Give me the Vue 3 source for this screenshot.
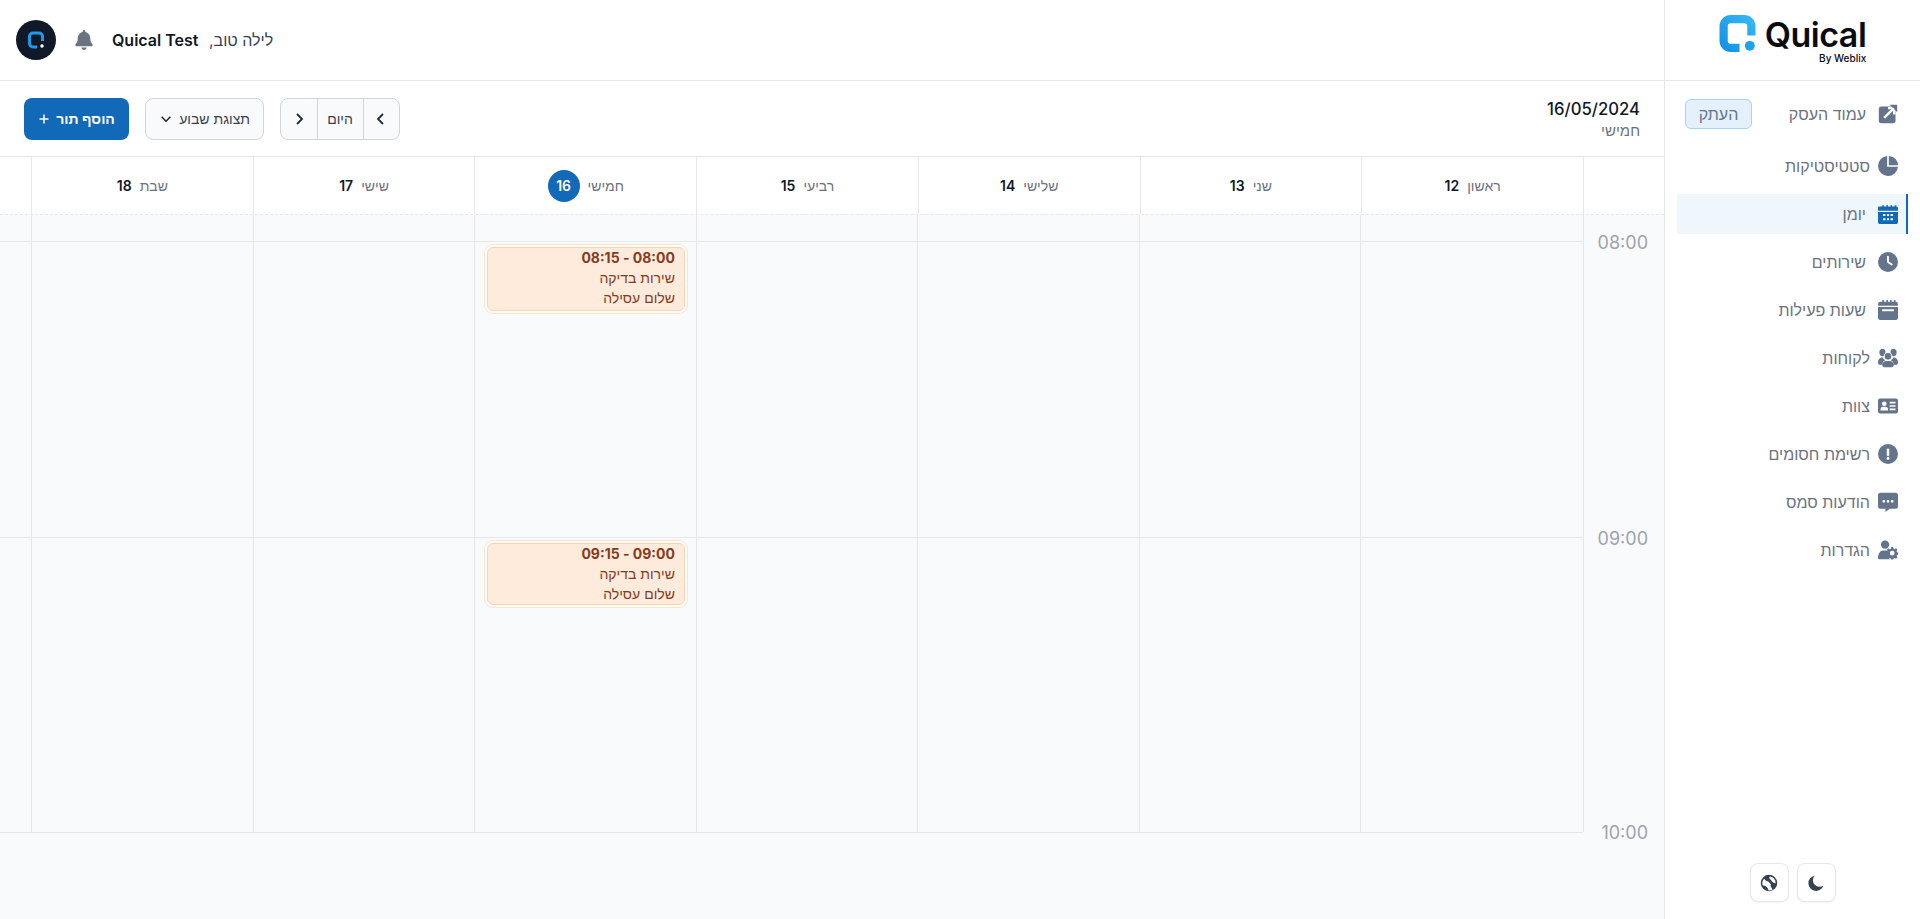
<script setup>
const navItems = [
  { label: 'סטטיסטיקות', icon: 'pie', tight: true },
  { label: 'יומן', icon: 'calendar', active: true },
  { label: 'שירותים', icon: 'clock' },
  { label: 'שעות פעילות', icon: 'hours' },
  { label: 'לקוחות', icon: 'users', tight: true },
  { label: 'צוות', icon: 'card', tight: true },
  { label: 'רשימת חסומים', icon: 'alert', tight: true },
  { label: 'הודעות סמס', icon: 'message', tight: true },
  { label: 'הגדרות', icon: 'gear', tight: true }
];

const days = [
  { name: 'ראשון', num: 12 },
  { name: 'שני', num: 13 },
  { name: 'שלישי', num: 14 },
  { name: 'רביעי', num: 15 },
  { name: 'חמישי', num: 16, today: true },
  { name: 'שישי', num: 17 },
  { name: 'שבת', num: 18 }
];

const hours = [
  { time: '08:00', event: '08:00 - 08:15', height: 64 },
  { time: '09:00', event: '09:00 - 09:15', height: 62 }
];
</script>

<template>
  <div class="app" dir="rtl">
    <aside class="sidebar">
      <div class="logo">
        <div class="logo-text" dir="ltr">
          <span class="logo-name">Quical</span>
          <span class="logo-by">By Weblix</span>
        </div>
        <svg class="logo-mark" viewBox="0 0 36 36">
          <defs>
            <linearGradient id="lg" x1="0" y1="1" x2="1" y2="0">
              <stop offset="0" stop-color="#1593e4" />
              <stop offset="1" stop-color="#35b6f4" />
            </linearGradient>
          </defs>
          <path d="M31.500 20V11a7 7 0 0 0-7-7H11.500a7 7 0 0 0-7 7v14a7 7 0 0 0 7 7H20" fill="none" stroke="url(#lg)" stroke-width="8" stroke-linecap="butt" />
          <circle cx="30" cy="30" r="4.800" fill="#1ba4ea" />
        </svg>
      </div>

      <nav class="nav">
        <a class="nav-item first">
          <svg class="nav-icon" viewBox="0 0 24 24">
            <rect x="1" y="3" width="20" height="20" rx="3" />
            <path d="M7.500 16.500 18 6M12 5h7.500v7.500" fill="none" stroke="#fff" stroke-width="2.800" />
            <path d="M14 1h9v9l-3-3-3-3z" />
            <path d="M7.500 16.500 19 5" fill="none" stroke="#fff" stroke-width="2.600" />
          </svg>
          <span>עמוד העסק</span>
          <button class="copy">העתק</button>
        </a>
        <a v-for="item in navItems" :key="item.label" class="nav-item" :class="{ active: item.active, tight: item.tight }">
          <svg class="nav-icon" viewBox="0 0 24 24">
            <template v-if="item.icon === 'pie'">
              <path d="M11 0v13h13A12 12 0 1 1 11 0z" />
              <path d="M13 0A11 11 0 0 1 24 11H13z" />
            </template>
            <template v-else-if="item.icon === 'calendar'">
              <path d="M3 3h2V1.500h2V3h3V1.500h2V3h3V1.500h2V3h3V1.500h2V3a2 2 0 0 1 2 2v3H0V5a2 2 0 0 1 1-2z" />
              <path fill-rule="evenodd" d="M0 9.500h24V22a2 2 0 0 1-2 2H2a2 2 0 0 1-2-2zM6 12v2.500h3V12zm4.800 0v2.500h2.400V12zM15 12v2.500h3V12zM6 17v2.500h3V17zm4.800 0v2.500h2.400V17zM15 17v2.500h3V17z" />
            </template>
            <path v-else-if="item.icon === 'clock'" d="M12 0a12 12 0 1 1 0 24A12 12 0 0 1 12 0zm-1.200 5.500V12c0 .4.200.8.500 1l4.500 3c.5.400 1.200.200 1.600-.300s.200-1.200-.300-1.600l-4-2.700V5.500a1.200 1.200 0 0 0-2.300 0z" />
            <path v-else-if="item.icon === 'hours'" fill-rule="evenodd" d="M5 0h2v2h3V0h2v2h2.500V0h2v2H19V0h2v2.100A3 3 0 0 1 24 5v16a3 3 0 0 1-3 3H3a3 3 0 0 1-3-3V5a3 3 0 0 1 3-3h2zM0 7v1.500h24V7zm5 4v2.500h14V11z" />
            <path v-else-if="item.icon === 'users'" fill-rule="evenodd" d="M5.500 1a3.500 3.500 0 0 1 3 5.300A5.500 5.500 0 0 0 6.700 9.800 3.500 3.500 0 1 1 5.500 1zm13 0a3.500 3.500 0 1 1-1.200 8.800 5.500 5.500 0 0 0-1.800-3.500A3.500 3.500 0 0 1 18.500 1zM12 6a4 4 0 1 1 0 8 4 4 0 0 1 0-8zM5.600 11.500c.600 1.400 1.700 2.500 3.100 3.100-2.200 1-3.700 3-3.700 5.400H2a2 2 0 0 1-2-2v-1c0-3 2.500-5.500 5.600-5.500zm12.800 0c3.100 0 5.600 2.500 5.600 5.500v1a2 2 0 0 1-2 2h-3c0-2.400-1.500-4.400-3.700-5.400 1.400-.6 2.500-1.700 3.100-3.100zM10 15.500h4c2.800 0 5 2.200 5 5a2.500 2.500 0 0 1-2.500 2.500h-9A2.500 2.500 0 0 1 5 20.500c0-2.800 2.200-5 5-5z" />
            <path v-else-if="item.icon === 'card'" fill-rule="evenodd" d="M2.500 3h19A2.500 2.500 0 0 1 24 5.500v13a2.500 2.500 0 0 1-2.500 2.500h-19A2.500 2.500 0 0 1 0 18.500v-13A2.500 2.500 0 0 1 2.500 3zm5 3.500a2.800 2.800 0 1 0 0 5.600 2.800 2.800 0 0 0 0-5.600zM6 13a3 3 0 0 0-3 3v1.500h9V16a3 3 0 0 0-3-3zm8-6v2h7V7zm0 4v2h7v-2zm0 4v2h7v-2z" />
            <path v-else-if="item.icon === 'alert'" d="M12 0a12 12 0 1 1 0 24A12 12 0 0 1 12 0zm0 5.500c-.8 0-1.500.7-1.500 1.500v5.800a1.500 1.500 0 0 0 3 0V7c0-.8-.7-1.500-1.500-1.500zM10.200 17a1.800 1.800 0 1 0 3.600 0 1.800 1.800 0 0 0-3.600 0z" />
            <path v-else-if="item.icon === 'message'" fill-rule="evenodd" d="M3 1h18a3 3 0 0 1 3 3v13a3 3 0 0 1-3 3h-7l-5 4v-4H3a3 3 0 0 1-3-3V4a3 3 0 0 1 3-3zm4 8.500a1.700 1.700 0 1 0 0 3.400 1.700 1.700 0 0 0 0-3.400zm5 0a1.700 1.700 0 1 0 0 3.400 1.700 1.700 0 0 0 0-3.400zm5 0a1.700 1.700 0 1 0 0 3.400 1.700 1.700 0 0 0 0-3.400z" />
            <template v-else-if="item.icon === 'gear'">
              <circle cx="8.500" cy="5.500" r="5" />
              <path d="M6.500 12.500h4c.6 0 1.200.1 1.700.3-.5 2.600-.3 6.700 1.800 10.200H1.500A1.500 1.500 0 0 1 0 21.500C0 16.500 2.500 12.500 6.500 12.500z" />
              <path fill-rule="evenodd" d="M17.300 10h2.400l.4 1.900 1.400.6 1.700-1 1.600 1.600-1 1.700.6 1.400 1.600.4v2.400l-1.600.4-.6 1.400 1 1.700-1.600 1.600-1.700-1-1.400.6-.4 1.300h-2.400l-.4-1.300-1.400-.6-1.700 1-1.600-1.600 1-1.700-.6-1.400-1.600-.4v-2.400l1.600-.4.6-1.400-1-1.700 1.600-1.600 1.700 1 1.400-.6zm1.200 4.500a2.800 2.800 0 1 0 0 5.600 2.800 2.800 0 0 0 0-5.600z" transform="translate(-1.500 -1.500)" />
            </template>
          </svg>
          <span>{{ item.label }}</span>
        </a>
      </nav>

      <div class="side-tools">
        <button class="tool">
          <svg viewBox="0 0 24 24" width="16" height="16">
            <path d="M10 1A11.500 11.500 0 1 0 23 16 10 10 0 0 1 10 1z" />
          </svg>
        </button>
        <button class="tool">
          <svg viewBox="0 0 24 24" width="18" height="18">
            <path fill-rule="evenodd" d="M12 1a11 11 0 1 1 0 22 11 11 0 0 1 0-22zm-6.500 5.300A8.900 8.900 0 0 0 3.500 15l4.500 1.200 3 3.800v1.800c.4.100.7.100 1 .1 1.800 0 3.400-.500 4.800-1.400l-2.300-3.500c-.4-.7-.5-1-.3-1.800l.3-1.700-3.500-3.500-3-1zm8-3.100L12 5l3 3.500 2 2.500 3.800 1.500A8.900 8.900 0 0 0 13.500 3.200z" />
          </svg>
        </button>
      </div>
    </aside>

    <main class="main">
      <header class="topbar">
        <div class="greeting">לילה טוב, <b>Quical Test</b></div>
        <svg class="bell" viewBox="0 0 448 512">
          <path d="M224 0c-17.700 0-32 14.300-32 32V51.200C119 66 64 130.600 64 208v18.800c0 47-17.300 92.400-48.500 127.600l-7.400 8.300c-8.400 9.400-10.400 22.900-5.300 34.400S19.400 416 32 416H416c12.600 0 24-7.400 29.200-18.900s3.100-25-5.300-34.400l-7.400-8.300C401.300 319.200 384 273.900 384 226.800V208c0-77.400-55-142-128-156.800V32c0-17.700-14.300-32-32-32zm45.300 493.300c12-12 18.700-28.300 18.700-45.300H224 160c0 17 6.700 33.300 18.700 45.300s28.300 18.700 45.300 18.700s33.300-6.700 45.300-18.700z" />
        </svg>
        <div class="avatar">
          <svg viewBox="0 0 36 36" width="18" height="18">
            <path d="M31 20V11a7 7 0 0 0-7-7H12a7 7 0 0 0-7 7v14a7 7 0 0 0 7 7h8" fill="none" stroke="#1d9be8" stroke-width="6" />
            <circle cx="30" cy="30" r="3.500" fill="#fff" />
          </svg>
        </div>
      </header>

      <section class="toolbar">
        <div class="date">
          <div class="date-main">16/05/2024</div>
          <div class="date-sub">חמישי</div>
        </div>
        <div class="nav-group">
          <button class="seg seg-arrow">
            <svg viewBox="0 0 16 16" width="16" height="16"><path d="M10 3 5 8l5 5" /></svg>
          </button>
          <button class="seg seg-today">היום</button>
          <button class="seg seg-arrow">
            <svg viewBox="0 0 16 16" width="16" height="16"><path d="m6 3 5 5-5 5" /></svg>
          </button>
        </div>
        <button class="view-btn">
          <span>תצוגת שבוע</span>
          <svg viewBox="0 0 16 16" width="14" height="14"><path d="m3 5.500 5 5 5-5" /></svg>
        </button>
        <button class="add-btn">
          <span>הוסף תור</span>
          <svg viewBox="0 0 16 16" width="12" height="12"><path d="M8 2v12M2 8h12" /></svg>
        </button>
      </section>

      <div class="day-head">
        <div class="head-cell"></div>
        <div v-for="d in days" :key="d.num" class="head-cell">
          <span class="day-name">{{ d.name }}</span>
          <span class="day-num" :class="{ today: d.today }">{{ d.num }}</span>
        </div>
        <div class="head-rest"></div>
      </div>

      <div class="grid">
        <div class="cell allday time-cell"></div>
        <div v-for="d in days" :key="d.num" class="cell allday"></div>
        <div class="cell allday rest"></div>

        <template v-for="h in hours" :key="h.time">
          <div class="cell hour time-cell"><span class="time">{{ h.time }}</span></div>
          <div v-for="d in days" :key="d.num" class="cell hour">
            <div v-if="d.today" class="event" :style="{ height: h.height + 'px' }">
              <div class="event-time">{{ h.event }}</div>
              <div>שירות בדיקה</div>
              <div>שלום עסילה</div>
            </div>
          </div>
          <div class="cell hour rest"></div>
        </template>

        <div class="end-time"><span class="time">10:00</span></div>
        <div class="end-line"></div>
      </div>
    </main>
  </div>
</template>

<style>
html,
body {
  margin: 0;
  height: 100%;
  overflow: hidden;
}
</style>

<style scoped>
.app {
  display: flex;
  height: 919px;
  overflow: hidden;
  background: #fff;
  color: #111827;
  font-family: Inter, "Liberation Sans", sans-serif;
  font-size: 14px;
}

button {
  font: inherit;
  cursor: pointer;
}

/* sidebar */
.sidebar {
  width: 255px;
  flex: none;
  display: flex;
  flex-direction: column;
  border-left: 1px solid #e5e7eb;
}

.logo {
  height: 81px;
  flex: none;
  box-sizing: border-box;
  display: flex;
  justify-content: center;
  gap: 9px;
  padding-top: 15px;
  border-bottom: 1px solid #e5e7eb;
}

.logo-mark {
  width: 37px;
  height: 37px;
}

.logo-text {
  display: flex;
  flex-direction: column;
  align-items: flex-end;
  color: #0b0b10;
}

.logo-name {
  font-size: 34px;
  font-weight: 600;
  line-height: 34px;
  margin-top: 3px;
  letter-spacing: -0.5px;
}

.logo-by {
  font-size: 10px;
  font-weight: 500;
  line-height: 12px;
}

.nav {
  display: flex;
  flex-direction: column;
  gap: 8px;
  padding: 13px 12px 0;
}

.nav-item {
  display: flex;
  align-items: center;
  height: 40px;
  flex: none;
  gap: 12px;
  padding: 0 10px 0 8px;
  color: #6b7280;
  font-size: 16px;
}

.nav-item.tight {
  gap: 8px;
}

.nav-item.first {
  margin-bottom: 4px;
}

.nav-icon {
  width: 20px;
  height: 20px;
  flex: none;
  fill: #64748b;
}

.nav-item.active {
  background: #eff6fc;
  border-right: 2px solid #1169b8;
  padding-right: 8px;
}

.nav-item.active .nav-icon {
  fill: #1169b8;
}

.copy {
  margin-right: auto;
  width: 67px;
  height: 30px;
  padding: 0;
  border: 1px solid #a5d4f5;
  border-radius: 6px;
  background: #e4f1fc;
  color: #64748b;
  font-size: 16px;
}

.side-tools {
  margin-top: auto;
  display: flex;
  justify-content: center;
  gap: 8px;
  padding-bottom: 17px;
}

.tool {
  width: 39px;
  height: 39px;
  padding: 0;
  display: flex;
  align-items: center;
  justify-content: center;
  border: 1px solid #e5e7eb;
  border-radius: 8px;
  background: #fff;
  box-shadow: 0 1px 2px rgba(0, 0, 0, 0.05);
  fill: #374151;
}

/* main */
.main {
  flex: 1;
  min-width: 0;
  display: flex;
  flex-direction: column;
}

.topbar {
  height: 81px;
  flex: none;
  box-sizing: border-box;
  display: flex;
  align-items: center;
  gap: 19px;
  padding-left: 16px;
  border-bottom: 1px solid #e5e7eb;
}

.greeting {
  margin-right: auto;
  font-size: 16px;
  color: #374151;
}

.greeting b {
  margin-right: 6px;
  font-weight: 600;
  color: #111827;
}

.bell {
  width: 18px;
  height: 20px;
  fill: #6b7280;
}

.avatar {
  width: 40px;
  height: 40px;
  border-radius: 50%;
  background: #111827;
  display: flex;
  align-items: center;
  justify-content: center;
}

.toolbar {
  height: 76px;
  flex: none;
  box-sizing: border-box;
  display: flex;
  align-items: center;
  gap: 16px;
  padding: 0 24px;
  border-bottom: 1px solid #e5e7eb;
}

.date {
  margin-left: auto;
  line-height: 20px;
}

.date-main {
  font-size: 16.700px;
  font-weight: 500;
  line-height: 24px;
}

.date-sub {
  font-size: 15px;
  color: #6b7280;
}

.nav-group {
  display: flex;
  height: 42px;
  box-sizing: border-box;
  border: 1px solid #d1d5db;
  border-radius: 8px;
  background: #f9fafb;
}

.seg {
  height: 100%;
  padding: 0;
  border: 0;
  background: none;
  display: flex;
  align-items: center;
  justify-content: center;
  color: #374151;
}

.seg-arrow {
  width: 35.500px;
}

.seg svg {
  fill: none;
  stroke: #1f2937;
  stroke-width: 1.8;
}

.seg-today {
  width: 47px;
  border-left: 1px solid #d1d5db;
  border-right: 1px solid #d1d5db;
}

.view-btn {
  width: 119px;
  height: 42px;
  padding: 0 13px 0 0;
  display: flex;
  align-items: center;
  gap: 6px;
  border: 1px solid #d1d5db;
  border-radius: 8px;
  background: #f9fafb;
  color: #374151;
}

.view-btn svg {
  fill: none;
  stroke: #1f2937;
  stroke-width: 1.8;
}

.add-btn {
  width: 105px;
  height: 42px;
  padding: 0;
  display: flex;
  align-items: center;
  justify-content: center;
  gap: 6px;
  border: 0;
  border-radius: 8px;
  background: #1169b8;
  color: #fff;
  font-weight: 600;
}

.add-btn svg {
  fill: none;
  stroke: #fff;
  stroke-width: 2;
}

/* calendar */
.day-head {
  height: 57px;
  flex: none;
  box-sizing: border-box;
  display: grid;
  grid-template-columns: 81px repeat(7, 221.720px) 1fr;
}

.head-cell {
  box-sizing: border-box;
  display: flex;
  align-items: center;
  justify-content: center;
  gap: 8px;
  border-left: 1px solid #e5e7eb;
}

.day-name {
  color: #6b7280;
}

.day-num {
  font-weight: 600;
  color: #111827;
}

.day-num.today {
  width: 32px;
  height: 32px;
  border-radius: 50%;
  background: #1169b8;
  color: #fff;
  display: flex;
  align-items: center;
  justify-content: center;
}

.grid {
  flex: 1;
  display: grid;
  grid-template-columns: 81px 222.600px repeat(6, 221.500px) 1fr;
  grid-template-rows: 26px 296px 295px 1fr;
  background: #f9fafb;
  border-top: 1px dashed #e5e7eb;
}

.cell {
  box-sizing: border-box;
  position: relative;
  border-left: 1px solid #e5e7eb;
}

.cell.rest {
  border-left: 0;
}

.hour {
  border-top: 1px solid #e5e7eb;
}

.time-cell.hour {
  border-top: 0;
}

.time {
  display: block;
  width: 64px;
  text-align: right;
  margin-right: 16px;
  font-size: 18px;
  line-height: 24px;
  color: #9ca3af;
  transform: translateY(-10px);
}

.end-time .time {
  transform: translateY(-11px);
}

.end-line {
  grid-column: 2 / -1;
  border-top: 1px solid #e5e7eb;
}

.event {
  position: absolute;
  top: 5px;
  left: 12px;
  right: 11px;
  box-sizing: border-box;
  padding: 0 9px;
  background: #feebdc;
  border: 1px solid #fcd5b0;
  border-radius: 6px;
  box-shadow: 0 0 0 2px #fff, 0 0 0 3px #fde3cc;
  color: #843c20;
  line-height: 20px;
}

.event-time {
  font-weight: 700;
}
</style>
